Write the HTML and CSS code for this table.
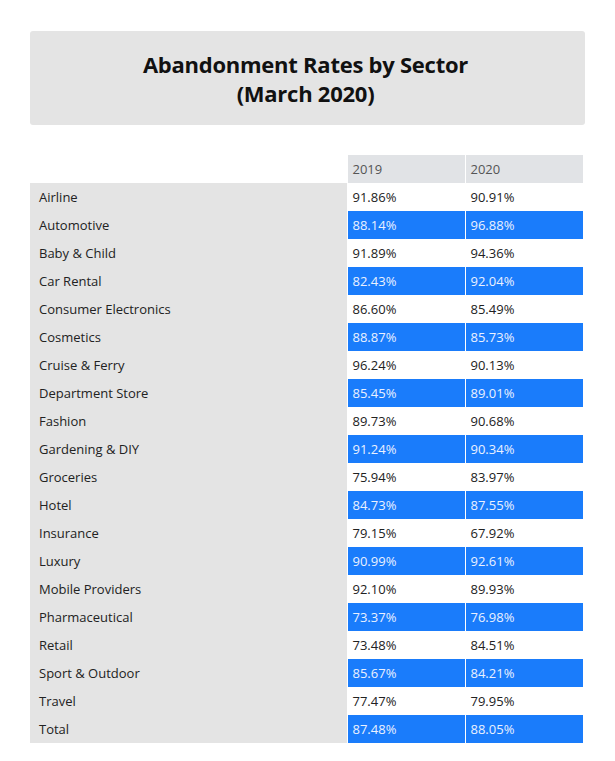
FILE: index.html
```html
<!DOCTYPE html>
<html>
<head>
<meta charset="utf-8">
<link rel="stylesheet" href="styles.css">
</head>
<body>
<div class="page">
  <div class="title-box">
    <h1 class="title">Abandonment Rates by Sector<br>(March 2020)</h1>
  </div>
  <table class="rates">
    <thead>
      <tr><th class="blank"></th><th>2019</th><th>2020</th></tr>
    </thead>
    <tbody>
      <tr><td class="sector">Airline</td><td>91.86%</td><td>90.91%</td></tr>
      <tr class="hl"><td class="sector">Automotive</td><td>88.14%</td><td>96.88%</td></tr>
      <tr><td class="sector">Baby &amp; Child</td><td>91.89%</td><td>94.36%</td></tr>
      <tr class="hl"><td class="sector">Car Rental</td><td>82.43%</td><td>92.04%</td></tr>
      <tr><td class="sector">Consumer Electronics</td><td>86.60%</td><td>85.49%</td></tr>
      <tr class="hl"><td class="sector">Cosmetics</td><td>88.87%</td><td>85.73%</td></tr>
      <tr><td class="sector">Cruise &amp; Ferry</td><td>96.24%</td><td>90.13%</td></tr>
      <tr class="hl"><td class="sector">Department Store</td><td>85.45%</td><td>89.01%</td></tr>
      <tr><td class="sector">Fashion</td><td>89.73%</td><td>90.68%</td></tr>
      <tr class="hl"><td class="sector">Gardening &amp; DIY</td><td>91.24%</td><td>90.34%</td></tr>
      <tr><td class="sector">Groceries</td><td>75.94%</td><td>83.97%</td></tr>
      <tr class="hl"><td class="sector">Hotel</td><td>84.73%</td><td>87.55%</td></tr>
      <tr><td class="sector">Insurance</td><td>79.15%</td><td>67.92%</td></tr>
      <tr class="hl"><td class="sector">Luxury</td><td>90.99%</td><td>92.61%</td></tr>
      <tr><td class="sector">Mobile Providers</td><td>92.10%</td><td>89.93%</td></tr>
      <tr class="hl"><td class="sector">Pharmaceutical</td><td>73.37%</td><td>76.98%</td></tr>
      <tr><td class="sector">Retail</td><td>73.48%</td><td>84.51%</td></tr>
      <tr class="hl"><td class="sector">Sport &amp; Outdoor</td><td>85.67%</td><td>84.21%</td></tr>
      <tr><td class="sector">Travel</td><td>77.47%</td><td>79.95%</td></tr>
      <tr class="hl"><td class="sector">Total</td><td>87.48%</td><td>88.05%</td></tr>
    </tbody>
  </table>
</div>
</body>
</html>
```
FILE: styles.css
```css
html, body {
  margin: 0;
  padding: 0;
  background: #ffffff;
}
body {
  font-family: "Open Sans", "Liberation Sans", sans-serif;
  color: #222222;
}
.page {
  padding: 31px 30px 0 30px;
}
.title-box {
  width: 555px;
  height: 94px;
  box-sizing: border-box;
  padding: 2px 4px 0 0;
  background: #e4e4e4;
  border-radius: 3px;
  display: flex;
  align-items: center;
  justify-content: center;
}
.title {
  margin: 0;
  font-size: 22px;
  font-weight: 700;
  letter-spacing: -0.25px;
  line-height: 29px;
  text-align: center;
  color: #111111;
}
.rates {
  margin-top: 30px;
  border-collapse: collapse;
  font-size: 13px;
}
.rates th,
.rates td {
  height: 28px;
  padding: 0;
  box-sizing: border-box;
  text-align: left;
  font-weight: 400;
  vertical-align: middle;
}
.rates th {
  background: #e1e3e6;
  color: #555555;
  width: 118px;
  padding-left: 5px;
  border-left: 1px solid #ffffff;
}
.rates th.blank {
  background: #ffffff;
  width: 317px;
  border-left: none;
}
.rates td {
  background: #ffffff;
  color: #222222;
  padding-left: 5px;
  border-left: 1px solid #ffffff;
}
.rates td.sector {
  background: #e4e4e4;
  padding-left: 9px;
  border-left: none;
  width: 317px;
}
.rates tr.hl td {
  background: #1a7cfb;
  color: #eaf1ff;
  border-left: 1px solid #ffffff;
}
.rates tr.hl td.sector {
  background: #e4e4e4;
  color: #222222;
  border-left: none;
}
```
